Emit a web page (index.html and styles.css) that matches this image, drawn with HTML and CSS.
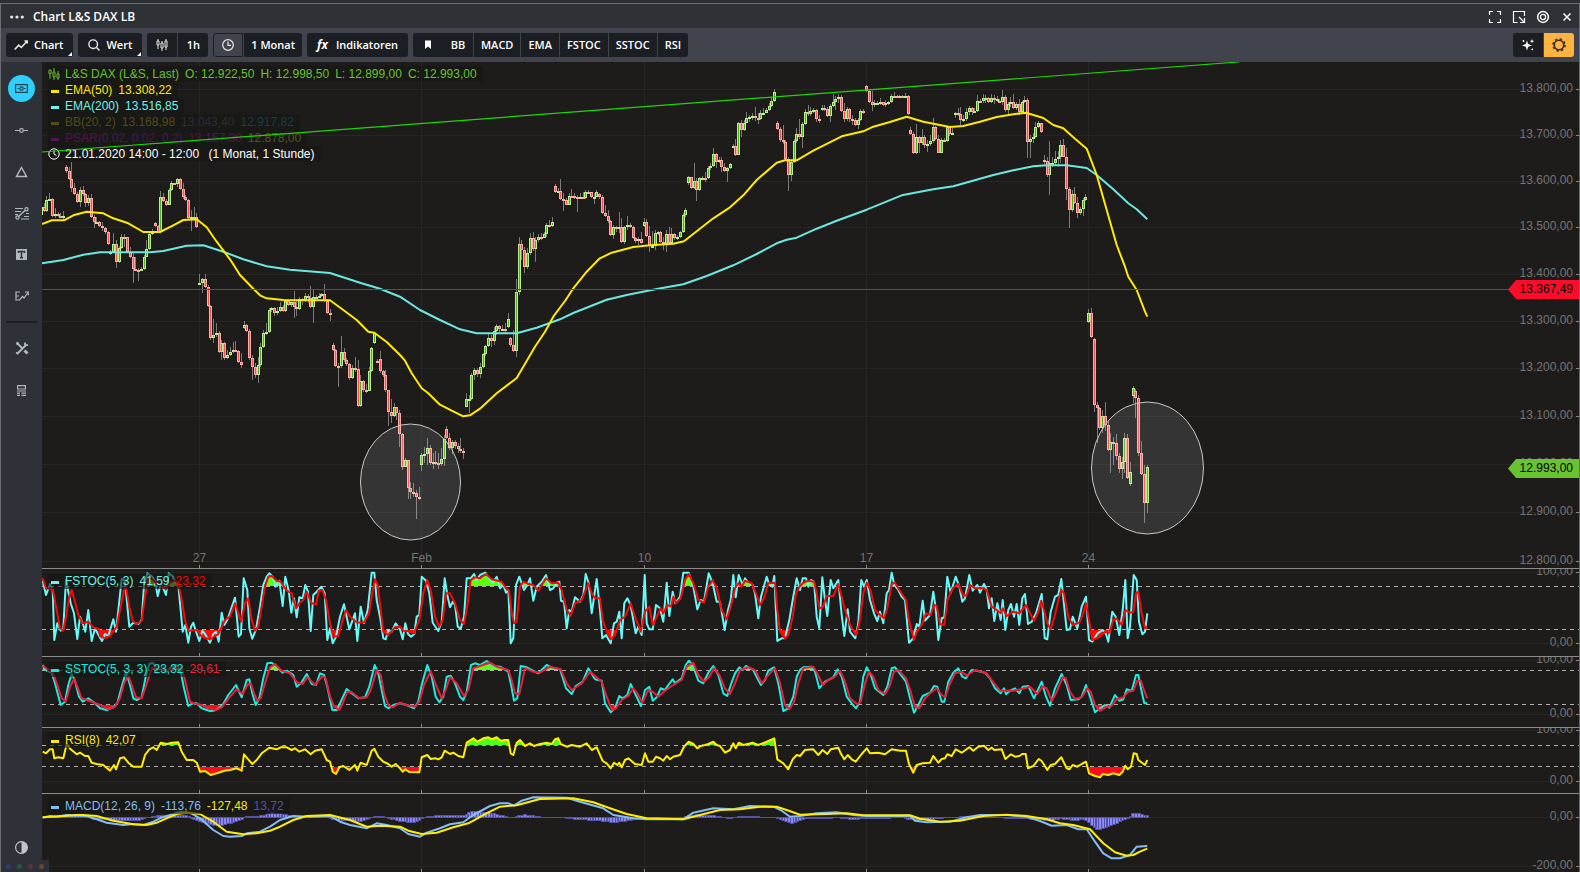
FILE: index.html
```html
<!DOCTYPE html>
<html lang="de">
<head>
    <meta charset="UTF-8">
    <meta name="viewport" content="width=device-width, initial-scale=1.0">
    <title>Chart L&amp;S DAX LB</title>
    <link rel="stylesheet" href="styles.css">
</head>
<body>
    <div class="window">

        <!-- Titelleiste -->
        <header class="titlebar">
            <button class="icon-btn" aria-label="Menü">
                <svg width="14" height="14" viewBox="0 0 14 14" fill="#e8e8e8">
                    <circle cx="1.7" cy="7" r="1.6"/><circle cx="7" cy="7" r="1.6"/><circle cx="12.3" cy="7" r="1.6"/>
                </svg>
            </button>
            <h1 class="title">Chart L&amp;S DAX LB</h1>
            <div class="window-actions">
                <button class="icon-btn" aria-label="Vollbild">
                    <svg width="14" height="14" viewBox="0 0 14 14" fill="none" stroke="#fff" stroke-width="1.2">
                        <path d="M1.5 5V1.5H5M9 1.5h3.5V5M12.5 9v3.5H9M5 12.5H1.5V9"/>
                    </svg>
                </button>
                <button class="icon-btn" aria-label="Verkleinern">
                    <svg width="14" height="14" viewBox="0 0 14 14" fill="none" stroke="#fff" stroke-width="1.2">
                        <path d="M5.5 12.5h-4v-11h11v4.5M7 7l5 5M12.5 8v4.5H8"/>
                    </svg>
                </button>
                <button class="icon-btn" aria-label="Einstellungen">
                    <svg width="14" height="14" viewBox="0 0 14 14" fill="none" stroke="#fff">
                        <circle cx="7" cy="7" r="5.4" stroke-width="1.5"/><circle cx="7" cy="7" r="2.6" stroke-width="1.3"/>
                    </svg>
                </button>
                <button class="icon-btn" aria-label="Schließen">
                    <svg width="14" height="14" viewBox="0 0 14 14" stroke="#fff" stroke-width="1.5">
                        <path d="M3.5 3.5l7 7M10.5 3.5l-7 7"/>
                    </svg>
                </button>
            </div>
        </header>

        <!-- Werkzeugleiste -->
        <nav class="toolbar">
            <button class="btn has-menu">
                <svg width="14" height="12" viewBox="0 0 14 12" fill="none" stroke="#e8e8e8" stroke-width="1.6">
                    <path d="M.7 10.5l4-4.3 2.6 2.3L13 2.3M10.5 2h2.7v2.5"/>
                </svg>
                Chart
            </button>
            <button class="btn has-menu wide">
                <svg width="12" height="12" viewBox="0 0 12 12" fill="none" stroke="#e8e8e8" stroke-width="1.4">
                    <circle cx="5.2" cy="5.2" r="4.3"/><path d="M8.3 8.3l3.2 3.2"/>
                </svg>
                Wert
            </button>
            <div class="btn-group">
                <button class="btn" aria-label="Kerzen">
                    <svg width="12" height="12" viewBox="0 0 12 12" fill="none" stroke="#e8e8e8">
                        <path d="M2 0v2M2 6v4M6 2v2M6 9v3M10 0v2M10 8v3"/><path d="M1 2h2v4H1zM5 4h2v5H5zM9 2h2v6H9z"/>
                    </svg>
                </button>
                <button class="btn">1h</button>
            </div>
            <div class="btn-group">
                <button class="btn active" aria-label="Zeitraum">
                    <svg width="12" height="12" viewBox="0 0 12 12" fill="none" stroke="#e8e8e8" stroke-width="1.2">
                        <circle cx="6" cy="6" r="5.3"/><path d="M6 2.5V6.3h3"/>
                    </svg>
                </button>
                <button class="btn">1 Monat</button>
            </div>
            <button class="btn wide">
                <span class="fx">fx</span>
                Indikatoren
            </button>
            <div class="btn-group">
                <button class="btn" aria-label="Lesezeichen">
                    <svg width="8" height="10" viewBox="0 0 8 10" fill="#fff"><path d="M1 .5h6V9L4 6.500 1 9z"/></svg>
                </button>
                <button class="btn joined">BB</button>
                <button class="btn">MACD</button>
                <button class="btn">EMA</button>
                <button class="btn">FSTOC</button>
                <button class="btn">SSTOC</button>
                <button class="btn">RSI</button>
            </div>
            <div class="btn-group right">
                <button class="btn" aria-label="Effekte">
                    <svg width="14" height="14" viewBox="0 0 14 14" fill="#fff">
                        <path d="M6 2.5l1.2 3.6L11 7.5 7.2 8.8 6 12.5 4.8 8.8 1 7.5l3.8-1.4z"/>
                        <path d="M11 1l.6 1.6 1.6.6-1.600.6L11 5.400l-.6-1.600-1.600-.6 1.600-.6z"/>
                        <circle cx="2.5" cy="3" r=".9"/><circle cx="11.3" cy="11.3" r=".9"/>
                    </svg>
                </button>
                <button class="btn accent" aria-label="Optionen">
                    <svg width="14" height="14" viewBox="0 0 14 14" fill="none" stroke="#3a2f1c">
                        <circle cx="7" cy="7" r="4.7" stroke-width="1.6"/>
                        <circle cx="7" cy="7" r="6" stroke-width="1.6" stroke-dasharray="2.35 2.35"/>
                    </svg>
                </button>
            </div>
        </nav>

        <div class="content">

            <!-- Zeichenwerkzeuge -->
            <aside class="sidebar">
                <div class="tools">
                    <button class="tool selected" aria-label="Cursor">
                        <svg width="13" height="9" viewBox="0 0 13 9" fill="none" stroke="#1c4250" stroke-width="1.2">
                            <rect x=".6" y=".6" width="11.8" height="7.8"/><circle cx="6.5" cy="4.5" r="1.7"/><path d="M2.5 4.5h1.5M9 4.5h1.5"/>
                        </svg>
                    </button>
                    <button class="tool" aria-label="Linie">
                        <svg width="13" height="7" viewBox="0 0 13 7" fill="none" stroke="#b3b7be" stroke-width="1.2">
                            <path d="M0 3.5h4.5M8.5 3.5H13"/><circle cx="6.5" cy="3.5" r="1.8"/>
                        </svg>
                    </button>
                    <button class="tool" aria-label="Form">
                        <svg width="13" height="12" viewBox="0 0 13 12" fill="none" stroke="#b3b7be" stroke-width="1.5"><path d="M6.5 1.5l5 9h-10z"/></svg>
                    </button>
                    <button class="tool" aria-label="Fibonacci">
                        <svg width="14" height="13" viewBox="0 0 14 13" fill="none" stroke="#b3b7be" stroke-width="1.2">
                            <path d="M0 1.5h8M0 4.500h6M0 7.5h3M11 6.5h3M9 9.5h5M6 12h8"/>
                            <path d="M3.5 9.5l7-6.5" stroke-width="1.4"/>
                            <circle cx="11.5" cy="2.2" r="1.6"/><circle cx="2.5" cy="10.5" r="1.6"/>
                        </svg>
                    </button>
                    <button class="tool" aria-label="Text">
                        <svg width="11" height="11" viewBox="0 0 11 11">
                            <rect width="11" height="11" fill="#b3b7be"/><path d="M2.5 4V2.5h6V4M5.5 2.5v6M4 8.7h3" stroke="#2e3238" stroke-width="1.5" fill="none"/>
                        </svg>
                    </button>
                    <button class="tool" aria-label="Elliott">
                        <svg width="14" height="10" viewBox="0 0 14 10" fill="none" stroke="#b3b7be" stroke-width="1.2">
                            <path d="M5 1H1v8h3.5l3-3.5 1.5 1.5L13 1.5M1 5h3M10 1h3.3v3.3"/>
                        </svg>
                    </button>
                </div>
                <hr class="divider">
                <div class="tools small">
                    <button class="tool" aria-label="Werkzeuge">
                        <svg width="14" height="14" viewBox="0 0 14 14" fill="none" stroke="#b3b7be" stroke-width="1.8">
                            <path d="M1.5 1.5L8 8M3 12l8-8M1 11.5l2.5 1.5"/><path d="M9.5 9.5l3 3" stroke-width="3"/>
                            <path d="M10 1.5v2.7h3M1.5 3.5l2-2"/>
                        </svg>
                    </button>
                    <button class="tool" aria-label="Liste">
                        <svg width="9" height="11" viewBox="0 0 9 11" fill="none" stroke="#b3b7be" stroke-width="1.2">
                            <path d="M.6.6h7.8v3.4H.6zM0 6h9M0 8.2h3M0 10.4h3M4.5 8.2H9M4.5 10.4H9"/>
                        </svg>
                    </button>
                </div>
                <button class="tool theme" aria-label="Farbschema">
                    <svg width="13" height="13" viewBox="0 0 13 13">
                        <circle cx="6.5" cy="6.5" r="5.9" fill="none" stroke="#c0c3cb" stroke-width="1.2"/><path d="M6.5.6a5.9 5.9 0 0 1 0 11.8z" fill="#c0c3cb"/>
                    </svg>
                </button>
                <div class="dots">
                    <span class="dot blue"></span><span class="dot green"></span><span class="dot red"></span><span class="dot brown"></span>
                </div>
            </aside>

            <!-- Chart mit Indikatoren -->
            <main class="panels">
                <section class="panel">
                    <svg class="plot" id="price"></svg>
                    <ul class="legend">
                        <li class="c-green">
                            <svg class="key" width="12" height="12" viewBox="0 0 12 12" fill="none" stroke="#69c230">
                                <path d="M2 7v4M6 0v4M6 9v3M10 3v3M10 10v2"/><path d="M1 2h2v4H1zM5 4h2v5H5zM9 6h2v4H9z"/>
                            </svg>
                            <span>L&amp;S DAX (L&amp;S, Last)</span><span>O: 12.922,50</span><span>H: 12.998,50</span><span>L: 12.899,00</span><span>C: 12.993,00</span>
                        </li>
                        <li class="c-yellow"><i class="key bar"></i><span>EMA(50)</span><span>13.308,22</span></li>
                        <li class="c-cyan"><i class="key bar"></i><span>EMA(200)</span><span>13.516,85</span></li>
                        <li class="c-bb"><i class="key bar"></i><span>BB(20, 2)</span><span>13.168,98</span><span class="c-bb-mid">13.043,40</span><span class="c-bb-low">12.917,82</span></li>
                        <li class="c-psar"><i class="key bar"></i><span>PSAR(0.02, 0.02, 0.2)</span><span>13.157,30</span><span class="c-psar-low">12.878,00</span></li>
                        <li class="c-white">
                            <svg class="key" width="12" height="12" viewBox="0 0 12 12" fill="none" stroke="#fff"><circle cx="6" cy="6" r="5.2"/><path d="M6 2.5V6l2.5 1.5"/></svg>
                            <span>21.01.2020 14:00 - 12:00</span><span>&nbsp;(1 Monat, 1 Stunde)</span>
                        </li>
                    </ul>
                    <svg class="overlay">
                        <line x1="0" y1="90" x2="1197" y2="0" stroke="#1fd800" stroke-width="1.2"/>
                    </svg>
                </section>
                <section class="panel">
                    <svg class="plot" id="fstoc"></svg>
                    <ul class="legend"><li class="c-cyan"><i class="key bar"></i><span>FSTOC(5, 3)</span><span>41,59</span><span class="c-red">23,32</span></li></ul>
                </section>
                <section class="panel">
                    <svg class="plot" id="sstoc"></svg>
                    <ul class="legend"><li class="c-aqua"><i class="key bar"></i><span>SSTOC(5, 3, 3)</span><span>23,32</span><span class="c-crimson">29,61</span></li></ul>
                </section>
                <section class="panel">
                    <svg class="plot" id="rsi"></svg>
                    <ul class="legend"><li class="c-yellow"><i class="key bar"></i><span>RSI(8)</span><span>42,07</span></li></ul>
                </section>
                <section class="panel">
                    <svg class="plot" id="macd"></svg>
                    <ul class="legend"><li class="c-blue"><i class="key bar"></i><span>MACD(12, 26, 9)</span><span>-113,76</span><span class="c-yellow">-127,48</span><span class="c-violet">13,72</span></li></ul>
                </section>
            </main>
        </div>
    </div>
    <script src="chart.js"></script>
</body>
</html>
```
FILE: styles.css
```css
* {
    margin: 0;
    padding: 0;
    box-sizing: border-box;
}

body {
    height: 100vh;
    padding-top: 3px;
    background: #2b2e33;
    color: #fff;
    font-family: 'Open Sans', 'Noto Sans', sans-serif;
    overflow: hidden;
}

button {
    border: none;
    background: none;
    color: inherit;
    font: inherit;
    cursor: pointer;
}

.window {
    display: flex;
    flex-direction: column;
    height: 100%;
    border: 1px solid #6b6e73;
    border-bottom: none;
}

/* Titelleiste */
.titlebar {
    display: flex;
    align-items: center;
    gap: 9px;
    flex: 0 0 24px;
    padding: 1px 5px 0 9px;
    background: #2e3136;
}

.title {
    font-size: 12px;
    font-weight: 600;
    line-height: 22px;
}

.icon-btn {
    display: flex;
    width: 14px;
    height: 14px;
}

.window-actions {
    display: flex;
    gap: 10px;
    margin-left: auto;
}

/* Werkzeugleiste */
.toolbar {
    display: flex;
    align-items: center;
    gap: 5px;
    flex: 0 0 34px;
    padding: 0 5px;
    background: #41444c;
}

.btn {
    display: flex;
    align-items: center;
    justify-content: center;
    gap: 6px;
    position: relative;
    min-width: 30px;
    height: 24px;
    padding: 0 7px;
    border-radius: 3px;
    background: #1b1e23;
    font-size: 11px;
    font-weight: 600;
    line-height: 24px;
    white-space: nowrap;
}

.btn:hover {
    background: #262a31;
}

.has-menu {
    padding: 0 10px 0 8px;
}

.has-menu::after {
    content: '';
    position: absolute;
    right: 1px;
    bottom: 1px;
    border: 2px solid transparent;
    border-right-color: #fff;
    border-bottom-color: #fff;
}

.btn.wide {
    padding: 0 10px;
}

.btn-group {
    display: flex;
    gap: 1px;
}

.btn-group .btn {
    border-radius: 0;
}

.btn-group .btn:first-child {
    border-radius: 3px 0 0 3px;
}

.btn-group .btn:last-child {
    border-radius: 0 3px 3px 0;
}

.btn-group .joined {
    margin-left: -1px;
}

.btn.active {
    border: 1px solid #1b1e23;
    background: #41444c;
}

.btn.accent {
    background: #ffb340;
}

.btn-group.right {
    margin-left: auto;
}

.fx {
    margin-right: 2px;
    font-size: 12px;
    font-weight: 700;
    font-style: italic;
}

/* Seitenleiste */
.content {
    display: flex;
    flex: 1;
    min-height: 0;
}

.sidebar {
    display: flex;
    flex-direction: column;
    flex: 0 0 41px;
    position: relative;
    padding-top: 6px;
    background: #2e3238;
}

.tools {
    display: grid;
    grid-auto-rows: 1fr;
    height: 249px;
}

.tools.small {
    height: 84px;
}

.tool {
    display: flex;
    align-items: center;
    justify-content: center;
    place-self: center;
    width: 27px;
    height: 27px;
    border-radius: 50%;
}

.tool.selected {
    background: #2ecffc;
}

.divider {
    height: 2px;
    margin: 4px 5px;
    border: none;
    background: #1b1e23;
}

.tool.theme {
    margin: auto auto 11px;
}

.dots {
    display: flex;
    align-items: center;
    gap: 6px;
    position: absolute;
    left: 0;
    bottom: 0;
    z-index: 1;
    width: 48px;
    height: 12px;
    padding-left: 5px;
    background: #2e3238;
}

.dot {
    width: 5px;
    height: 5px;
    border-radius: 50%;
}

.dot.blue { background: #2c3e6b; }
.dot.green { background: #25573f; }
.dot.red { background: #5c3340; }
.dot.brown { background: #5f4a32; }

/* Chartbereiche */
.panels {
    display: grid;
    grid-template-rows: 1fr 88px 71px 66px 79px;
    flex: 1;
    min-width: 0;
    background: #1d1c1b;
}

.panel {
    position: relative;
    min-height: 0;
    overflow: hidden;
}

.panel + .panel {
    border-top: 1px solid #8c8c8a;
}

.plot {
    display: block;
    width: 100%;
    height: 100%;
}

.plot text {
    fill: #747472;
    font: 12px 'Liberation Sans', Arial, sans-serif;
}

.plot .tag-text {
    fill: #000;
}

/* Trendlinie liegt über der Legende */
.overlay {
    position: absolute;
    top: 0;
    left: 0;
    width: 100%;
    height: 100%;
    pointer-events: none;
}

.grid { stroke: #262625; }
.tick { stroke: #8c8c8a; }
.dashed { stroke: #b0b0ae; stroke-dasharray: 4 4; }
.line { fill: none; stroke-width: 2; stroke-linejoin: round; }

/* Legende */
.legend {
    position: absolute;
    top: 4px;
    left: 5px;
    list-style: none;
    font: 12px/16px 'Liberation Sans', Arial, sans-serif;
}

.legend li {
    display: flex;
    align-items: center;
    gap: 6px;
    width: max-content;
    height: 16px;
    padding: 0 6px 0 1px;
    background: rgba(22, 22, 20, 0.6);
}

.legend .key {
    width: 12px;
    margin-right: -1px;
}

.legend .bar {
    height: 3px;
    margin-top: 2px;
    border-left: 3px solid transparent;
    border-right: 1px solid transparent;
    background: currentColor;
    background-clip: padding-box;
}

.c-green { color: #69c230; }
.c-yellow { color: #ffe900; }
.c-cyan { color: #6ff2ea; }
.c-aqua { color: #18e8dc; }
.c-white { color: #fff; }
.c-red { color: #ff0000; }
.c-crimson { color: #f01c38; }
.c-blue { color: #84bdf5; }
.c-violet { color: #5552a6; }
.c-bb { color: #564a17; }
.c-bb-mid { color: #2d2e33; }
.c-bb-low { color: #1b3d4a; }
.c-psar { color: #521452; }
.c-psar-low { color: #59531a; }
```
FILE: chart.js
```js
// Koordinaten der Kursdaten liegen in Drittelpixeln vor
const UNIT = 3;
const LEFT = 42;
const STEP = 44.45 / 16;   // 16 Stundenkerzen pro Handelstag
const ORIGIN = 199.5;      // 27. Januar

// Pro Tag: Eröffnung, dann 'Schluss,Hoch,Tief' (oder 'Eröffnung>Schluss,...')
const days = [
    '464 440,415,468 452,430,455 420,408,456 416,400,420 468,414,470 463,445,475 468,455,470 470,460,475 468,452,480',
    '322 334,316,338 357,320,360 383,305,397 401,370,404 425,395,428 390,380,440 402,378,408 430,400,440 414,405,438 472,403,475 487,465,503 485,470,490 498,482,502 503,486,512 517,500,522 552,512,555',
    '582 575,570,586 552,520,578 606,540,623 563,558,608 531,522,566 531,522,560 575,530,580 590,560,595 626,580,668 629,592,632 630,625,662 627,622,634 590,585,630 568,540,592 521,517,570 517,508,524',
    '490 498,486,502 515,495,520 411,393,518 424,400,426 434,418,438 390,385,436 369,362,392 371,368,376 357,354,380 386,355,390 412,370,418 421,405,424 475,418,478 472,450,513 470,442,480 502,460,504',
    '674 670,642,676 656,653,698 680,643,684 738,676,742 835,736,840 826,777,848 818,790,830 877,812,880 850,840,900 895,845,900 885,870,898 876,860,888 870,845,880 873,842,876 905,870,910 915,880,925',
    '803 795,782,808 812,792,816 895,808,900 920,885,960 945,910,955 915,890,970 860,850,920 820,810,865 815,790,825 750,745,818 745,740,755 760,740,768 752,740,765 740,725,755 752,735,755 722,718,755',
    '722 735,720,738 725,720,742 740,692,773 747,720,768 718,712,750 722,715,735 708,700,725 715,702,728 740,678,745 712,690,788 710,705,718 707,700,712 703,700,710 722,672,725 758,718,762 762,748,782',
    '855 870,848,872 917,866,920 917,910,981 877,828,925 900,865,905 912,895,918 954,908,960 924,915,958 928,891,935 1037,900,1040 964,945,1040 990,960,995 992,973,998 932,922,994 865,860,935 850>820,815,852',
    '902 904,898,908 898>932,873,940 946,930,950 991,930,995 1055,990,1098 1067,1018,1090 1042,1028,1072 1060,1040,1080 1123,1050,1160 1220,1120,1230 1200,1195,1222 1283,1200,1317 1295,1265,1318 1298,1270,1310 1310,1290,1377 1314,1281,1320',
    '1214 1185,1178,1232 1182,1160,1210 1165,1135,1214 1210,1155,1215 1205,1180,1227 1208,1173,1215 1213,1180,1227 1197,1165,1218 1137,1125,1218 1107>1135,1098,1138 1163,1120,1170 1147,1140,1182 1158,1140,1166 1166,1150,1180 1172,1134,1180 1175,1165,1196',
    '1040 1018,998,1042 1017,1005,1060 946,940,1020 931,925,960 943,925,950 920,910,955 883,878,925 859,855,888 835,820,862 842,825,860 812,800,855 797,792,825 808,795,815 806,795,812 808,790,820 802>778,760,805',
    '835 855,830,860 873,810,876 695,657,890 553,532,705 570,540,600 622,560,640 580,565,628 535,520,585 568,517,572 541,530,605 530,522,545 533,520,540 523,515,535 495,490,530 497,480,500 485,470,500',
    '378 395,372,400 392,385,398 417,357,420 420,400,452 434,415,436 407,400,436 409,388,415 411,400,418 413,405,455 411,400,415 414,395,418 395,390,416 397,390,400 412,395,415 410,400,432 395,390,412',
    '401 412,398,418 458,405,462 467,435,472 483,450,488 526,480,528 500,495,538 507,498,515 502,457,520 545,475,548 502,498,552 494,468,510 500,488,505 533,498,538 543,530,550 537,530,555 549,515,552',
    '498 485,475,502 527,478,530 558,498,575 557,513,560 520,510,570 517,512,525 545,512,550 552,530,570 521,510,575 550,500,555 522,503,550 533,518,540 531,525,540 515,512,535 465,460,518 450,445,470',
    '370 352,348,375 384,350,388 362,310,388 390,355,422 355,350,392 353,348,360 355,337,365 325,318,356 319,310,330 283,265,322 305,280,325 300,292,310 320,292,335 333,310,336 325,320,365 313,310,328',
    '260 258,252,262 284,238,288 190,185,286 210,180,232 188,180,212 175,155,190 172,165,185 168,160,180 175,142,182 177,160,192 160,150,180 158,145,165 150,145,160 138,130,152 123,110,140 95,88,125',
    '188 208,184,210 240,200,245 247,195,252 297,240,300 344,290,393 305,300,362 244,238,308 222,205,248 232,177,238 192,185,263 157,148,195 163,135,168 152,140,168 150,145,160 178,148,185 180,165,190',
    '150 145,135,152 148,135,152 167,140,170 137,132,185 125,103,140 118,108,150 110,103,130 152,106,155 178,130,185 147,142,182 178,145,185 180,165,196 196,175,198 181,175,206 152,147,183 160,148,162',
    '78 92,75,95 127,90,130 134,93,152 130,120,140 128,122,134 127,115,135 135,125,138 128,120,140 127,122,135 107,102,130 108,97,115 110,105,112 108,106,112 110,106,112 108,100,113 162,105,165',
    '210 222,200,225 280,215,283 232,192,282 250,228,280 230,207,255 254,225,265 252,240,275 243,225,258 200,175,248 238,198,240 278,225,280 241,235,280 242,235,245 202,198,245 222,200,228 220,205,225',
    '162 160,155,175 163,143,168 180,140,195 177,165,185 155,145,182 143,138,165 157,140,165 152,145,160 122,105,155 124,118,130 115,102,128 113,105,128 127,110,130 114,102,130 120,105,132 116,108,125',
    '122 126,118,130 110,90,135 151,105,155 131,125,163 126,112,140 143,102,148 133,125,150 155,117,165 127,122,160 120,108,128 247,115,293 238,225,293 230,220,248 202,185,235 190,182,205 217,188,220',
    '300 303,285,315 344,290,350 310,243,404 308,290,320 298,272,318 292,272,322 256,240,310 290,237,292 388,265,420 450,380,503 403,390,455 428,380,432 460,410,473 447,440,465 421,415,468 412,403,422',
    '785 760,747,788 830,745,834 838>1034,834,1055 1043,1025,1148 1103,1040,1110 1069,1050,1120 1096,1026,1112 1169,1080,1172 1147,1120,1238 1150,1130,1216 1187,1122,1200 1226,1180,1240 1205,1190,1257 1135,1120,1240 1253,1122,1256 1272>1235,1205,1278',
    '1007 985,978,1030 992>1013,988,1075 1178,1005,1188 1241,1144,1244 1328,1214,1389 1222,1215,1359'
];

// Reihen: [x-Versatz, 'x,y x,y ...']
const ema50 = [
    [120, '6,492 36,481 72,481 100,466 140,455 190,460 220,475 265,490 310,516 360,516 400,496 430,480 470,478 500,502 530,545 570,598 600,645 640,686 660,706 680,715 730,720 870,721 910,750 950,780 985,815 1003,818 1040,846 1080,885'],
    [900, '315,902 335,940 365,985 385,1000 420,1034 455,1052 490,1069 510,1066 540,1046 590,1000 650,954 670,920 705,860 735,815 760,770 797,720'],
    [1620, '100,685 140,635 178,596 215,578 280,561 330,556 400,551 432,544 470,514 520,475 570,442 610,406 650,360 710,308 735,301 770,301 820,272 905,229 970,214 1000,200 1050,186 1100,170 1150,185 1230,201 1270,198 1320,185'],
    [2700, '290,171 345,162 378,158 430,174 460,195 490,205 520,232 560,266 590,345 620,450 650,555 675,620 685,650 710,690 735,755 742,770']
];

const ema200 = [
    [120, '6,610 70,600 130,584 180,577 330,577 370,573 440,557 490,556 550,575 610,598 680,619 750,629 870,639 960,668 1020,686 1080,710 1140,750 1200,780 1260,808 1310,820 1430,820 1490,803 1560,778'],
    [1620, '100,759 200,719 260,705 350,687 430,673 500,648 580,616 650,582 710,550 740,539 770,533 830,506 890,482 980,449 1085,406 1180,388 1240,379 1320,356'],
    [2700, '280,345 340,331 400,319 440,316 500,316 560,324 590,345 640,388 685,430 710,448 742,478']
];

const fastK = [
    [0, '128,62 138,105 150,72 158,90 163,240 172,190 182,212 190,205 198,60 212,130 222,160 232,237 240,170 250,195 256,215 265,150 275,243 285,205 297,228 306,243 315,222 325,228 340,178 348,215 365,57 375,62 388,200 400,188 415,192 425,180 432,75 442,40 455,48 465,62 473,108 482,72 490,85 498,105 506,40 518,48 527,70 535,75 548,215 556,195 565,248 573,200 580,188 588,215 598,243 607,212 615,222 630,248 640,222 648,215 656,245 665,158 673,195 682,180 705,113 716,230 723,222 731,55 742,90 748,205 757,236 768,208 780,140 790,75 800,50 808,40 818,50 826,80 838,62 848,138 856,50 866,92 874,158 882,115 890,172 898,112 908,115 916,75 924,95 932,213 940,105 950,95 964,80 974,100 982,240 990,205 998,250 1008,230 1020,170 1032,133 1048,208 1065,160 1072,243 1082,140 1092,190 1103,150 1115,38 1123,38 1130,120 1140,170 1150,235 1157,238 1165,210 1175,215 1187,190'],
    [1200, '0,208 8,238 16,190 24,222 33,230 43,222 50,170 58,165 65,50 78,62 88,100 98,188 115,213 125,185 134,55 142,105 150,142 158,125 165,135 173,200 182,206 192,170 200,55 212,55 222,42 230,60 240,45 256,38 268,55 278,68 290,50 300,85 310,75 318,98 325,90 332,250 340,235 348,75 358,50 372,90 382,75 390,55 400,122 410,80 425,65 438,45 450,90 460,85 470,68 478,65 483,122 492,125 500,205 508,150 515,155 525,112 540,125 550,105 557,42 566,70 575,160 590,57 600,150 607,235 618,225 632,250 642,190 650,185 658,155 665,235 673,130 682,115 692,135 700,180 707,220 715,200 725,225 734,45 740,190 748,208 758,208 768,135 780,145 790,185 800,68 808,168 818,95 826,130 840,110 850,38 866,38 880,80 892,148 902,120 912,125 926,40 938,70 950,125 960,125 974,210 984,150 992,120 1000,45 1007,112 1016,45 1028,75 1035,55 1045,68 1058,75 1065,100 1075,175 1083,110 1100,50 1108,75 1117,80 1123,48 1132,243 1145,235 1155,235 1168,180 1178,120 1190,55'],
    [2400, '0,90 8,55 18,55 25,80 33,60 42,65 50,170 58,205 67,52 75,120 82,168 92,60 100,85 115,60 125,165 133,228 143,148 150,215 166,235 175,190 184,60 192,80 200,60 210,120 222,160 232,183 240,155 250,190 260,100 267,90 275,38 283,75 295,90 305,110 315,120 327,248 340,235 350,192 358,200 368,122 375,182 390,165 400,95 407,145 415,240 425,175 433,172 442,50 452,98 467,50 478,80 487,125 495,115 508,45 518,92 532,75 540,98 552,72 560,90 567,145 575,115 583,183 592,130 602,180 608,120 616,210 625,150 633,132 642,170 650,132 658,195 667,115 675,102 684,192 695,185 708,160 725,102 734,235 742,238 752,155 765,110 775,105 784,57 800,210 810,208 818,170 832,205 845,140 858,110 867,240 877,245 893,220 908,210 918,222 925,245 937,155 947,170 958,225 968,150 976,60 983,235 990,200 1001,45 1010,60 1017,185 1027,223 1035,215 1042,160']
];

const fastD = [
    [0, '128,55 138,85 158,87 170,150 180,205 190,212 198,170 208,110 215,90 225,125 235,165 248,190 265,185 280,202 297,208 300,228 315,235 330,228 350,200 360,150 372,90 378,82 388,140 398,182 410,193 425,182 435,110 445,55 460,60 470,72 485,78 498,88 508,70 525,60 535,70 545,120 555,180 565,212 590,210 605,230 630,238 655,222 675,180 690,170 705,130 715,160 723,185 735,130 745,115 755,180 765,212 775,200 785,140 795,80 805,50 815,48 830,62 842,65 860,92 875,100 888,145 900,128 910,120 920,95 935,130 948,133 956,92 967,90 978,120 990,190 1000,230 1015,228 1028,180 1038,150 1050,170 1072,188 1092,187 1107,160 1118,90 1125,58 1133,75 1142,150 1150,215 1165,225 1185,202'],
    [1200, '0,200 10,212 25,213 42,220 58,180 70,100 82,60 92,90 105,170 117,200 128,180 138,100 150,100 165,130 180,180 192,192 203,130 212,60 225,52 240,55 258,42 275,58 305,65 318,85 327,92 335,160 342,190 350,185 360,80 370,65 385,72 400,75 415,92 438,55 455,70 475,68 485,90 500,150 512,167 525,130 545,120 565,70 575,100 585,115 600,115 608,180 620,215 632,238 645,225 660,180 675,170 692,130 705,170 722,215 735,155 748,140 758,195 770,170 782,145 790,160 802,135 813,140 820,110 828,130 842,115 855,60 866,42 880,70 895,120 912,128 925,80 938,60 950,85 965,150 980,178 992,140 1005,85 1015,70 1025,80 1035,62 1055,70 1068,100 1080,135 1092,115 1105,70 1125,68 1132,150 1140,215 1155,235 1165,225 1178,170 1188,100'],
    [2400, '0,78 10,68 25,62 42,65 50,100 58,145 68,142 80,108 100,108 115,72 125,110 135,150 150,195 160,212 168,225 178,190 190,100 200,68 212,92 225,150 240,165 252,175 262,145 275,72 285,68 298,90 318,120 325,170 335,215 342,240 350,215 365,195 378,160 392,165 402,135 410,138 420,192 433,195 442,120 458,85 475,72 490,108 500,105 510,75 525,85 550,85 560,90 575,140 590,150 602,160 608,145 620,168 640,155 658,160 678,135 690,160 702,182 715,155 724,122 732,150 742,190 752,208 765,165 775,120 784,90 792,100 805,170 818,195 838,188 850,160 858,130 868,185 877,240 900,230 915,215 928,218 940,180 950,175 965,195 976,150 990,158 1000,155 1008,100 1015,95 1025,160 1035,205 1042,200']
];

const slowK = [
    [0, '128,315 140,332 155,338 165,370 182,435 195,425 205,375 215,342 225,362 237,410 248,425 265,415 285,430 300,445 320,450 340,442 352,430 365,380 378,335 390,375 400,415 410,420 425,412 437,350 448,312 458,308 470,325 485,322 498,335 515,320 528,315 540,325 552,385 565,438 578,430 590,430 605,445 632,454 648,450 668,435 685,405 708,375 725,412 740,360 748,358 757,400 767,435 778,415 790,355 802,310 815,308 830,320 848,338 862,332 880,345 890,380 903,370 920,342 935,372 948,375 960,340 972,345 982,380 997,450 1010,450 1020,430 1040,387 1055,400 1075,415 1095,412 1108,380 1124,315 1135,340 1145,390 1155,438 1165,445 1180,435'],
    [1200, '0,430 20,435 42,445 55,425 65,375 82,315 95,350 107,410 118,427 130,410 140,350 152,347 165,370 180,410 190,420 200,395 213,315 225,310 240,315 260,303 280,318 300,320 325,335 335,385 342,422 352,415 362,318 380,322 415,340 440,315 460,325 480,328 498,385 515,402 527,378 548,365 565,325 585,358 605,362 615,430 632,457 645,445 658,408 668,415 682,405 692,372 705,400 723,438 735,390 748,380 758,422 770,412 782,385 795,390 805,375 818,358 825,370 845,355 857,315 867,302 880,320 895,362 910,370 925,338 940,318 955,345 970,400 982,408 992,375 1005,340 1018,322 1028,330 1038,318 1060,330 1072,355 1083,375 1095,360 1105,332 1122,322 1135,370 1150,453 1165,445 1180,410 1190,350'],
    [2400, '0,330 10,322 35,320 45,335 58,385 75,365 100,352 113,328 125,350 140,410 155,430 168,445 180,425 190,350 200,322 212,345 225,385 250,405 262,380 275,325 285,322 295,335 318,365 330,415 342,458 355,435 368,408 390,398 402,378 412,380 425,425 433,425 445,365 460,338 475,325 487,350 497,355 515,330 530,332 555,338 570,355 585,385 602,400 612,385 618,403 630,392 645,385 658,400 668,380 685,378 702,415 725,365 738,410 750,437 765,385 785,342 800,375 812,420 835,418 845,410 858,375 870,410 885,457 900,445 915,435 928,443 945,405 958,422 970,418 980,388 995,393 1008,345 1015,345 1025,395 1033,430 1042,430']
];

const slowD = [
    [0, '128,318 158,337 170,370 185,415 197,425 210,380 222,357 232,380 245,415 275,425 300,435 325,447 345,440 360,415 372,370 385,347 395,375 408,412 425,415 437,380 455,325 470,320 500,330 528,322 545,322 555,360 570,425 590,432 605,435 625,445 648,450 665,442 690,410 710,388 728,402 742,375 752,370 762,400 772,422 782,415 795,370 810,322 825,312 845,332 870,340 892,368 908,372 922,352 945,375 967,348 977,355 990,410 1002,440 1018,450 1030,425 1042,395 1055,397 1078,415 1100,412 1112,390 1130,330 1142,345 1152,400 1165,435 1178,442'],
    [1200, '0,428 20,435 45,440 58,425 72,375 92,333 108,375 125,415 137,390 150,352 170,370 192,408 205,390 220,325 240,318 270,308 290,320 325,330 335,360 345,400 358,403 375,325 400,335 420,338 450,320 482,328 500,370 515,390 545,370 570,335 585,348 605,365 620,410 635,450 648,445 665,420 685,408 700,385 712,400 727,428 745,390 758,395 775,410 795,392 815,378 845,360 860,320 880,308 895,345 912,365 928,350 942,325 958,345 975,385 990,402 1005,370 1020,330 1045,322 1065,330 1085,370 1105,345 1125,325 1140,370 1155,435 1168,448 1182,425 1195,370'],
    [2400, '0,355 10,325 40,320 52,340 68,375 85,360 105,350 120,332 135,365 150,415 172,433 182,425 195,370 207,335 220,350 235,390 255,402 268,380 282,335 295,330 318,355 332,395 345,440 358,445 375,415 390,400 410,385 425,405 435,412 448,375 465,340 485,335 500,347 525,330 560,340 578,365 600,392 640,392 662,388 690,380 712,402 728,380 740,385 755,423 770,395 788,352 797,355 810,395 825,417 845,412 862,385 872,395 885,435 900,453 920,440 932,440 950,418 970,412 985,395 1000,392 1012,362 1022,362 1032,390 1042,415']
];

const rsi = [
    [0, '128,575 138,580 150,568 158,568 163,595 175,592 190,595 200,552 212,568 230,583 240,578 255,588 265,588 275,608 290,612 310,615 330,632 342,615 348,628 360,595 372,592 385,608 400,620 425,620 435,585 448,568 460,562 470,570 482,548 500,552 515,548 535,547 545,575 560,600 580,600 590,608 600,635 615,633 632,645 655,638 673,632 690,630 710,625 725,632 732,583 742,595 757,612 770,600 785,580 808,563 830,568 842,562 860,562 875,570 885,565 898,575 915,568 932,583 945,572 965,568 980,600 990,605 998,635 1008,642 1018,622 1030,618 1048,630 1065,615 1072,632 1082,608 1100,615 1115,572 1123,566 1135,590 1150,605 1165,612 1175,620 1187,612'],
    [1200, '0,625 8,635 16,628 28,636 58,637 65,592 82,585 92,597 105,595 115,598 125,592 134,572 150,582 160,578 175,588 190,592 200,548 212,540 220,535 232,545 250,535 265,532 275,538 290,532 302,542 315,540 325,540 332,580 340,585 350,548 360,540 375,558 390,550 402,558 420,552 440,548 455,552 465,538 475,535 482,552 500,560 515,555 540,560 560,550 575,570 590,562 608,603 620,610 632,625 642,608 652,615 658,608 665,622 675,600 685,595 705,612 725,615 735,580 745,605 758,605 768,590 780,595 790,602 800,588 810,598 820,590 840,585 852,560 866,545 880,552 892,565 902,558 915,555 925,552 940,545 950,555 960,558 975,578 990,570 1000,550 1007,565 1016,548 1030,555 1058,548 1075,555 1100,545 1123,535 1132,598 1150,610 1165,628 1178,598 1190,585'],
    [2400, '0,588 15,570 40,568 55,585 68,570 82,582 92,568 115,563 122,580 133,598 143,585 155,598 167,605 185,582 200,565 210,580 235,578 255,583 275,568 300,572 318,572 327,612 340,638 350,615 368,610 390,608 400,588 415,608 425,597 435,595 442,583 455,588 467,568 485,578 508,562 520,572 535,560 552,557 565,570 575,563 583,570 605,568 616,597 633,583 645,590 658,588 667,582 677,582 684,625 700,618 716,597 725,603 742,630 752,615 765,612 784,592 800,625 808,628 818,615 832,620 845,612 858,605 867,640 885,648 900,652 908,642 925,645 940,640 958,645 968,635 976,617 983,628 993,620 1001,580 1010,582 1015,600 1035,615 1042,600']
];

const macd = [
    [0, '128,773 150,768 170,770 200,765 260,768 290,778 320,788 370,795 400,792 430,795 460,785 480,775 510,765 540,755 570,758 600,775 640,810 670,828 690,830 725,828 740,820 780,815 810,800 840,780 880,768 930,770 990,768 1020,785 1050,795 1100,805 1130,790 1160,795'],
    [1200, '0,805 25,822 60,830 80,818 120,805 150,793 190,787 220,765 270,738 300,730 325,730 342,737 365,722 400,712 500,713 540,725 610,745 640,765 700,775 740,778 850,778 880,758 940,745 1000,748 1050,738 1120,740 1145,752 1170,770'],
    [2400, '0,768 50,760 110,757 160,765 200,768 330,767 345,782 380,787 450,785 500,772 540,765 620,765 680,770 720,783 755,797 800,795 835,808 860,808 885,845 910,880 935,895 960,895 990,885 1010,860 1042,858']
];

const signal = [
    [0, '128,772 190,768 240,764 290,768 340,782 400,793 440,795 470,788 500,775 530,762 560,758 600,762 640,785 680,815 730,823 770,820 810,812 840,800 880,780 920,768 990,765 1050,780 1100,800 1140,797'],
    [1200, '0,800 25,812 65,822 110,818 160,802 205,790 250,765 300,740 350,736 420,717 520,715 580,727 630,745 680,762 740,775 850,778 900,765 960,750 1020,748 1080,740 1130,740 1160,750'],
    [2400, '0,764 80,762 140,760 190,766 330,766 360,776 420,785 480,782 550,768 620,764 680,768 740,778 780,790 820,795 870,808 910,850 945,877 980,887 1000,885 1020,875 1042,866']
];

// Höhe der Histogrammbalken über der Nulllinie
const histogram = [
    [0, '120,0 165,3 190,7 240,6 265,0 280,-5 340,-8 420,-8 440,0 480,7 560,7 575,-3 600,-12 640,-23 660,-25 700,-14 725,-4 740,3 780,4 810,14 840,12 870,6 890,1 980,1 1000,-6 1040,-10 1080,-12 1100,-6 1120,2 1150,2 1170,-4'],
    [1200, '0,-12 45,-15 60,-6 75,2 130,7 190,6 215,18 260,15 300,7 325,1 337,-3 350,5 375,8 410,3 430,0 490,-1 520,-5 600,-10 640,-15 680,-10 720,-3 850,0 860,6 900,8 950,4 985,-3 1010,2 1060,2 1125,0 1145,-8 1172,-18'],
    [2400, '0,-8 20,-3 120,-1 150,-6 190,-4 240,-3 300,0 330,-6 350,-8 400,-5 440,0 510,3 600,-1 700,-5 750,-10 780,-4 820,-9 855,-6 870,-20 895,-38 920,-30 950,-16 975,-6 990,2 1001,13 1015,13 1030,6 1045,8']
];

const dates = [[199.5, '27'], [421.5, 'Feb'], [644.5, '10'], [866.5, '17'], [1088.5, '24']];

function points(series, top) {
    return series.flatMap(([dx, text]) => text.split(' ').map(p => {
        const [x, y] = p.split(',').map(Number);
        return [(x + dx) / UNIT, top + y / UNIT];
    }));
}

function line(series, top, color) {
    return `<polyline class="line" stroke="${color}" points="${points(series, top).map(p => p.map(v => v.toFixed(1)).join()).join(' ')}"/>`;
}

// Fläche zwischen Kurve und Schwelle
function zones(id, series, top, upper, lower, green, red) {
    const pts = points(series, top);
    const first = pts[0][0];
    const last = pts[pts.length - 1][0];
    const area = y => `M${first} ${y}L${pts.map(p => p.join(' ')).join('L')}L${last} ${y}Z`;
    return `<clipPath id="${id}-hi"><rect x="0" y="${upper - 60.5}" width="4000" height="60"/></clipPath>
        <clipPath id="${id}-lo"><rect x="0" y="${lower + 0.5}" width="4000" height="60"/></clipPath>
        <path d="${area(upper)}" fill="${green}" clip-path="url(#${id}-hi)"/>
        <path d="${area(lower)}" fill="${red}" clip-path="url(#${id}-lo)"/>`;
}

function render(id, top, levels, body, dashed = []) {
    let grid = '';
    levels.forEach(([y]) => grid += `<line class="grid" x1="0" x2="100%" y1="${y - top}" y2="${y - top}"/>`);
    dates.forEach(([x]) => grid += `<line class="grid" x1="${x - LEFT}" x2="${x - LEFT}" y1="0" y2="100%"/>`);
    dashed.forEach(y => grid += `<line class="dashed" x1="0" x2="100%" y1="${y - top}" y2="${y - top}"/>`);

    let axis = '';
    levels.forEach(([y, label]) => {
        axis += `<text x="-6" y="${Math.floor(y - top + 3)}" text-anchor="end">${label}</text>`;
        axis += `<line class="tick" x1="-3" x2="0" y1="${y - top}" y2="${y - top}"/>`;
    });

    let ticks = '';
    dates.forEach(([x, label]) => {
        ticks += `<line class="tick" x1="${x - LEFT}" x2="${x - LEFT}" y1="-3" y2="0"/>`;
        if (id === 'price') ticks += `<text x="${x - LEFT}" y="-6" text-anchor="middle">${label}</text>`;
    });

    document.getElementById(id).innerHTML = `${grid}
        <svg y="100%" overflow="visible">${ticks}</svg>
        <g transform="translate(${-LEFT} ${-top})">${body}</g>
        <svg x="100%" overflow="visible">${axis}${id === 'price' ? tags(top) : ''}</svg>`;
}

// Kursmarken am rechten Rand
function tags(top) {
    return [[289.5, '#ff0a28', '13.367,49'], [468.5, '#69c230', '12.993,00']].map(([y, color, label]) => {
        const c = y - top;
        return `<path d="M-71 ${c}L-63 ${c - 9.5}H0V${c + 9.5}H-63Z" fill="${color}"/>
            <text class="tag-text" x="-6" y="${Math.round(c + 3)}" text-anchor="end">${label}</text>`;
    }).join('');
}

function candles() {
    let wicks = '', up = '', upCore = '', down = '', downCore = '';
    days.forEach((day, d) => {
        const tokens = day.split(' ');
        let open = Number(tokens.shift());
        const start = d === 0 ? -57 : -48 + (d - 1) * 16;
        tokens.forEach((token, i) => {
            const [body, high, low] = token.split(',');
            const parts = body.split('>').map(Number);
            if (parts.length > 1) open = parts[0];
            const close = parts[parts.length - 1];
            const x = Math.floor(ORIGIN + (start + i) * STEP + 0.2);
            const px = v => Math.round(60 + v / UNIT);
            const y1 = px(Math.min(open, close));
            const y2 = Math.max(px(Math.max(open, close)), y1 + 2);
            wicks += `M${x} ${px(high)}h1V${px(low)}h-1z`;
            const box = `M${x - 1} ${y1}h3V${y2}h-3z`;
            const core = y2 - y1 > 2 ? `M${x} ${y1 + 1}h1V${y2 - 1}h-1z` : '';
            if (close < open) { up += box; upCore += core; } else { down += box; downCore += core; }
            open = close;
        });
    });
    return `<g shape-rendering="crispEdges"><path d="${wicks}" fill="#7b7b79"/>
        <path d="${up}" fill="#b9f08c"/><path d="${down}" fill="#ffaca4"/>
        <path d="${upCore}" fill="#4fb01f"/><path d="${downCore}" fill="#f94f4f"/></g>`;
}

function bars(zero) {
    const env = points(histogram, 0);
    let d = '';
    let k = 0;
    for (let i = -57; i <= 341; i++) {
        const x = ORIGIN + i * STEP;
        while (k < env.length - 2 && env[k + 1][0] < x) k++;
        const [a, b] = [env[k], env[k + 1]];
        const h = Math.round(a[1] + (b[1] - a[1]) * (x - a[0]) / (b[0] - a[0]));
        const left = Math.floor(x) - 0.5;
        if (h === 0) d += `M${left} ${zero + 0.5}h3`;
        else d += `M${left} ${zero + 0.5}v${-h}h3v${h}z`;
    }
    return `<path d="${d}" fill="#8a88f2" stroke="#5552a8"/>`;
}

const ellipse = (cx, cy, rx, ry) =>
    `<ellipse cx="${cx}" cy="${cy}" rx="${rx}" ry="${ry}" fill="#fff" fill-opacity=".11" stroke="#c9c9c9"/>`;

render('price', 62, [
    [89.5, '13.800,00'], [135.5, '13.700,00'], [181.5, '13.600,00'], [227.5, '13.500,00'],
    [274.5, '13.400,00'], [321.5, '13.300,00'], [368.5, '13.200,00'], [416.5, '13.100,00'],
    [464.5, '13.000,00'], [512.5, '12.900,00'], [561.5, '12.800,00']
], candles()
    + line(ema200, 60, '#6be8e0') + line(ema50, 60, '#ffea00')
    + '<path d="M42 289.5H4000" stroke="#e01030"/>'
    + ellipse(410.5, 482, 50, 58) + ellipse(1147.5, 468, 56, 66));

render('fstoc', 569, [[572.5, '100,00'], [643.5, '0,00']],
    zones('f', fastD, 560, 586.5, 629.5, '#5dff0a', '#ff0808')
    + line(fastK, 560, '#66fbfb') + line(fastD, 560, '#ff0505'), [586.5, 629.5]);

render('sstoc', 657, [[660.5, '100,00'], [714.5, '0,00']],
    zones('s', slowD, 560, 670.5, 704.5, '#5dff0a', '#ff0808')
    + line(slowK, 560, '#16f0e2') + line(slowD, 560, '#f01c38'), [670.5, 704.5]);

render('rsi', 728, [[730.5, '100,00'], [781.5, '0,00']],
    zones('r', rsi, 560, 745.5, 766.5, '#4dff1a', '#ff0a1c')
    + line(rsi, 560, '#ffee00'), [745.5, 766.5]);

render('macd', 794, [[817.5, '0,00'], [866.5, '-200,00']],
    bars(817) + line(macd, 560, '#84bdf5') + line(signal, 560, '#ffee00'));
```
